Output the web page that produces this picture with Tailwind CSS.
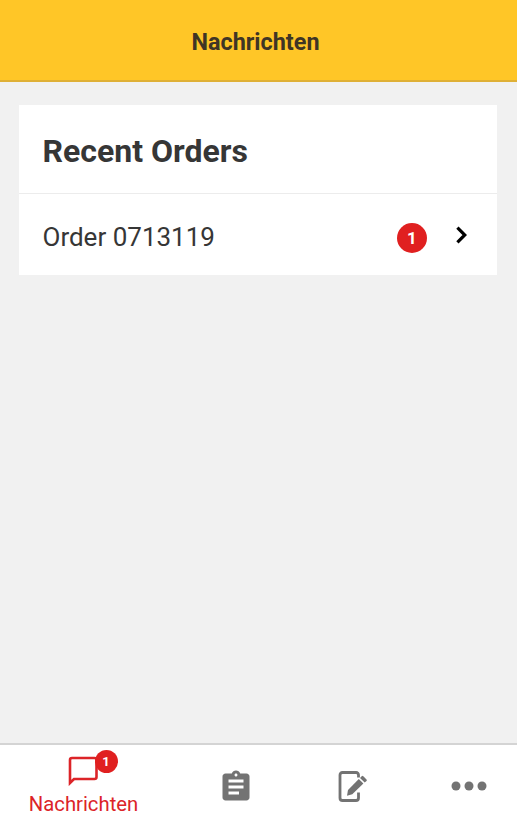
<!DOCTYPE html>
<html lang="de">

<head>
    <meta charset="UTF-8">
    <meta name="viewport" content="width=device-width, initial-scale=1.0">
    <title>Nachrichten</title>
    <script src="https://cdn.jsdelivr.net/npm/@tailwindcss/browser@4"></script>
</head>

<body class="bg-[#f1f1f1] font-['Roboto',sans-serif] text-[#363636]">
    <div class="flex flex-col h-screen overflow-hidden">
        <!-- Header -->
        <header class="h-[82px] shrink-0 flex items-center justify-center bg-[#ffc627] border-b-2 border-[#dfb036]">
            <h1 class="text-[23.4px] leading-8 font-bold text-[#3f3525] pt-1 -ml-1.5">Nachrichten</h1>
        </header>

        <!-- Recent Orders -->
        <main class="flex-1 pt-[23px] pl-[19px] pr-5">
            <section class="bg-white">
                <h2 class="h-[89px] flex items-center pl-[23.5px] pt-1 text-[32px] font-bold border-b border-[#ececec]">Recent Orders</h2>
                <a href="#" class="h-[81px] flex items-center pl-[23.5px] pr-[30px]">
                    <span class="flex-1 text-[26px] pt-1.5">Order 0713119</span>
                    <span class="size-[30px] mt-[7px] mr-[29px] pt-0.5 rounded-full bg-[#e02020] flex items-center justify-center text-white text-[17px] font-bold">1</span>
                    <svg class="w-[11px] h-[18px]" viewBox="0 0 11 18" fill="none" stroke="#000" stroke-width="3.2">
                        <path d="M1.4 1.7L8.8 9l-7.4 7.3" />
                    </svg>
                </a>
            </section>
        </main>

        <!-- Tab bar -->
        <nav class="h-[82px] shrink-0 flex bg-white border-t-2 border-[#d4d4d4] text-[#737373]">
            <a href="#" class="w-[167px] flex flex-col items-center text-[#dc2428]">
                <span class="relative mt-2.5 -ml-0.5">
                    <svg class="w-[32px] h-[31px]" viewBox="0 0 32 31" fill="none" stroke="currentColor" stroke-width="2.6">
                        <path d="M3 28V5Q3 3 5 3H27.5Q29.5 3 29.5 5V22Q29.5 24 27.5 24H7Z" />
                    </svg>
                    <span class="absolute left-[28px] -top-[5px] size-[23px] pt-px rounded-full bg-[#e02020] flex items-center justify-center text-white text-[13px] font-bold">1</span>
                </span>
                <span class="text-[20.3px] leading-6 mt-1.5">Nachrichten</span>
            </a>
            <a href="#" class="w-[138px] flex justify-center pt-6">
                <svg class="size-9" viewBox="0 0 24 24" fill="currentColor">
                    <path d="M19 3h-4.18C14.4 1.84 13.3 1 12 1c-1.3 0-2.4.84-2.82 2H5c-1.1 0-2 .9-2 2v14c0 1.1.9 2 2 2h14c1.1 0 2-.9 2-2V5c0-1.1-.9-2-2-2zm-7 0c.55 0 1 .45 1 1s-.45 1-1 1-1-.45-1-1 .45-1 1-1zm2 14H7v-2h7v2zm3-4H7v-2h10v2zm0-4H7V7h10v2z" />
                </svg>
            </a>
            <a href="#" class="w-[95px] flex justify-center pt-[26px]">
                <svg class="w-[30px] h-[32px]" viewBox="0 0 30 32" fill="none">
                    <path d="M20.5 6.5V4Q20.5 1.5 18 1.5H4.5Q2 1.5 2 4V27Q2 29.5 4.5 29.5H18Q20.5 29.5 20.5 27V21.5" stroke="currentColor" stroke-width="2.8" />
                    <path d="M20.8 8L25.4 12.6L14.3 23.3L9 24.8L10 19Z" fill="currentColor" />
                    <path d="M22 6.9L23.7 5.2Q24.5 4.4 25.3 5.2L28.5 8.4Q29.3 9.2 28.5 10L26.7 11.6Z" fill="currentColor" />
                </svg>
            </a>
            <a href="#" class="flex-1 flex justify-center pt-9 pl-[21px]">
                <svg class="w-9 h-[10px]" viewBox="0 0 36 10" fill="currentColor">
                    <circle cx="5" cy="5" r="4.5" />
                    <circle cx="18" cy="5" r="4.5" />
                    <circle cx="31" cy="5" r="4.5" />
                </svg>
            </a>
        </nav>
    </div>
</body>

</html>
